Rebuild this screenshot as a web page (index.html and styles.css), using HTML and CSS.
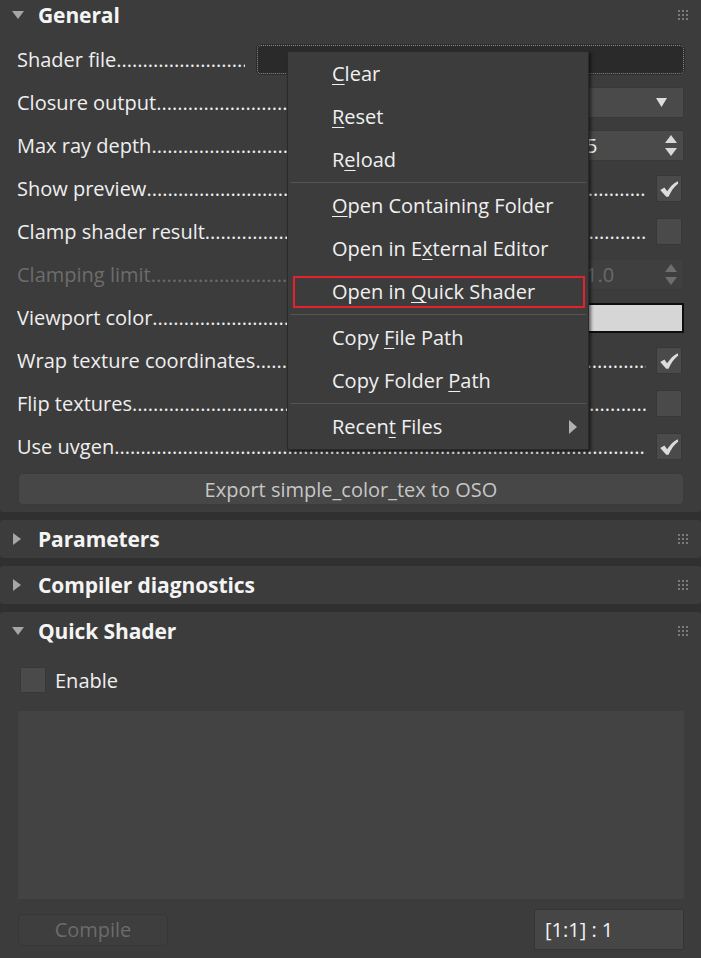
FILE: index.html
```html
<!DOCTYPE html>
<html>
<head>
<meta charset="utf-8">
<link rel="stylesheet" href="styles.css">
</head>
<body>
<div class="panel">
  <section class="sec first">
    <div class="head">
      <svg class="tri" width="12" height="12" viewBox="0 0 12 12"><path d="M0 2H12L6 10Z" fill="#a6a6a6"/></svg>
      <span class="title">General</span>
      <svg class="grip" width="10" height="10" viewBox="0 0 10 10"><g fill="#7a7a7a"><rect x="0" y="0" width="2" height="2"/><rect x="4" y="0" width="2" height="2"/><rect x="8" y="0" width="2" height="2"/><rect x="0" y="4" width="2" height="2"/><rect x="4" y="4" width="2" height="2"/><rect x="8" y="4" width="2" height="2"/><rect x="0" y="8" width="2" height="2"/><rect x="4" y="8" width="2" height="2"/><rect x="8" y="8" width="2" height="2"/></g></svg>
    </div>
    <div class="body">
      <div class="row"><span class="label">Shader file</span><div class="file"></div></div>
      <div class="row"><span class="label">Closure output</span><div class="ctl drop"><svg width="11" height="9" viewBox="0 0 11 9"><path d="M0 0H11L5.5 9Z" fill="#dedede"/></svg></div></div>
      <div class="row"><span class="label">Max ray depth</span><div class="ctl spin"><span class="val">5</span><svg width="12" height="22" viewBox="0 0 12 22"><path d="M6 0L12 8H0Z M0 13H12L6 21Z" fill="#d8d8d8"/></svg></div></div>
      <div class="row"><span class="label">Show preview</span><div class="cb"><svg width="26" height="26" viewBox="0 0 26 26"><path d="M3.5 14L8 11.5L11 15.5C14 10.5 18 6.5 22.5 4.5L23 7C18.5 10.5 15 15.5 12.5 21.5H10Z" fill="#dcdcdc"/></svg></div></div>
      <div class="row"><span class="label">Clamp shader result</span><div class="cb"></div></div>
      <div class="row dis"><span class="label">Clamping limit</span><div class="ctl spin off"><span class="val">1.0</span><svg width="12" height="22" viewBox="0 0 12 22"><path d="M6 0L12 8H0Z M0 13H12L6 21Z" fill="#6e6e6e"/></svg></div></div>
      <div class="row"><span class="label">Viewport color</span><div class="ctl swatch"></div></div>
      <div class="row"><span class="label">Wrap texture coordinates</span><div class="cb"><svg width="26" height="26" viewBox="0 0 26 26"><path d="M3.5 14L8 11.5L11 15.5C14 10.5 18 6.5 22.5 4.5L23 7C18.5 10.5 15 15.5 12.5 21.5H10Z" fill="#dcdcdc"/></svg></div></div>
      <div class="row"><span class="label">Flip textures</span><div class="cb"></div></div>
      <div class="row"><span class="label">Use uvgen</span><div class="cb"><svg width="26" height="26" viewBox="0 0 26 26"><path d="M3.5 14L8 11.5L11 15.5C14 10.5 18 6.5 22.5 4.5L23 7C18.5 10.5 15 15.5 12.5 21.5H10Z" fill="#dcdcdc"/></svg></div></div>
      <div class="btn export">Export simple_color_tex to OSO</div>
    </div>
  </section>

  <section class="sec">
    <div class="head">
      <svg class="tri" width="12" height="12" viewBox="0 0 12 12"><path d="M1 0L9 6L1 12Z" fill="#a6a6a6"/></svg>
      <span class="title">Parameters</span>
      <svg class="grip" width="10" height="10" viewBox="0 0 10 10"><g fill="#7a7a7a"><rect x="0" y="0" width="2" height="2"/><rect x="4" y="0" width="2" height="2"/><rect x="8" y="0" width="2" height="2"/><rect x="0" y="4" width="2" height="2"/><rect x="4" y="4" width="2" height="2"/><rect x="8" y="4" width="2" height="2"/><rect x="0" y="8" width="2" height="2"/><rect x="4" y="8" width="2" height="2"/><rect x="8" y="8" width="2" height="2"/></g></svg>
    </div>
  </section>

  <section class="sec">
    <div class="head">
      <svg class="tri" width="12" height="12" viewBox="0 0 12 12"><path d="M1 0L9 6L1 12Z" fill="#a6a6a6"/></svg>
      <span class="title">Compiler diagnostics</span>
      <svg class="grip" width="10" height="10" viewBox="0 0 10 10"><g fill="#7a7a7a"><rect x="0" y="0" width="2" height="2"/><rect x="4" y="0" width="2" height="2"/><rect x="8" y="0" width="2" height="2"/><rect x="0" y="4" width="2" height="2"/><rect x="4" y="4" width="2" height="2"/><rect x="8" y="4" width="2" height="2"/><rect x="0" y="8" width="2" height="2"/><rect x="4" y="8" width="2" height="2"/><rect x="8" y="8" width="2" height="2"/></g></svg>
    </div>
  </section>

  <section class="sec last">
    <div class="head">
      <svg class="tri" width="12" height="12" viewBox="0 0 12 12"><path d="M0 2H12L6 10Z" fill="#a6a6a6"/></svg>
      <span class="title">Quick Shader</span>
      <svg class="grip" width="10" height="10" viewBox="0 0 10 10"><g fill="#7a7a7a"><rect x="0" y="0" width="2" height="2"/><rect x="4" y="0" width="2" height="2"/><rect x="8" y="0" width="2" height="2"/><rect x="0" y="4" width="2" height="2"/><rect x="4" y="4" width="2" height="2"/><rect x="8" y="4" width="2" height="2"/><rect x="0" y="8" width="2" height="2"/><rect x="4" y="8" width="2" height="2"/><rect x="8" y="8" width="2" height="2"/></g></svg>
    </div>
    <div class="qbody">
      <div class="enable"><div class="cb"></div><span>Enable</span></div>
      <div class="editor"></div>
      <div class="bottom">
        <div class="btn compile">Compile</div>
        <div class="pos">[1:1] : 1</div>
      </div>
    </div>
  </section>
</div>

<div class="menu">
  <div class="item"><span><u>C</u>lear</span></div>
  <div class="item"><span><u>R</u>eset</span></div>
  <div class="item"><span>R<u>e</u>load</span></div>
  <div class="sep"></div>
  <div class="item"><span><u>O</u>pen Containing Folder</span></div>
  <div class="item"><span>Open in E<u>x</u>ternal Editor</span></div>
  <div class="item marked"><span>Open in <u>Q</u>uick Shader</span></div>
  <div class="sep"></div>
  <div class="item"><span>Copy <u>F</u>ile Path</span></div>
  <div class="item"><span>Copy Folder <u>P</u>ath</span></div>
  <div class="sep"></div>
  <div class="item sub"><span>Recen<u>t</u> Files</span><svg width="8" height="14" viewBox="0 0 8 14"><path d="M0 0L8 7L0 14Z" fill="#b0b0b0"/></svg></div>
</div>
</body>
</html>
```

FILE: styles.css
```css
* { box-sizing: border-box; margin: 0; padding: 0; }

body {
  width: 701px;
  height: 958px;
  overflow: hidden;
  position: relative;
  background: #303030;
  font-family: "Open Sans", "Noto Sans", sans-serif;
  font-size: 20px;
  color: #eeeeee;
}

.sec {
  background: #3c3c3c;
  border-radius: 3px;
  margin-bottom: 8px;
}
.sec.first { margin-top: -4px; }
.sec.last { height: 360px; margin-bottom: 0; }

.head {
  height: 38px;
  display: flex;
  align-items: center;
  padding: 0 13px 0 12px;
}
.head .tri { flex: none; margin-right: 14px; }
.head .title {
  flex: 1;
  font-weight: 700;
  font-size: 21px;
  color: #f4f4f4;
  letter-spacing: -0.1px;
}
.head .grip { flex: none; }

.body { padding: 4px 17px 7px 17px; }

.row {
  height: 43px;
  display: flex;
  align-items: center;
}
.label {
  flex: 1;
  min-width: 0;
  overflow: hidden;
  white-space: nowrap;
  color: #efefef;
}
.label::after {
  content: "....................................................................................................................................";
}
.row.dis .label { color: #6c6c6c; }

.file {
  flex: none;
  width: 427px;
  height: 29px;
  margin-left: 12px;
  background: #2a2a2a;
  border: 1px dotted #8c8c8c;
  border-radius: 4px;
  box-shadow: 0 0 0 1px #2c2c2c;
}

.ctl {
  flex: none;
  width: 107px;
  height: 31px;
  margin-left: 10px;
  display: flex;
  align-items: center;
  background: #4a4a4a;
  border: 1px solid #393939;
}
.drop { justify-content: flex-end; padding-right: 16px; }
.spin { padding: 0 6px 0 8px; color: #efefef; }
.spin .val { flex: 1; }
.spin.off { background: #3f3f3f; color: #6a6a6a; border-color: #3a3a3a; }
.swatch {
  height: 30px;
  background: #d6d6d6;
  border: 2px solid #0e0e0e;
}

.cb {
  flex: none;
  width: 26px;
  height: 27px;
  margin-left: 10px;
  margin-right: 2px;
  background: #4a4a4a;
  border: 1px solid #383838;
  display: flex;
  align-items: center;
  justify-content: center;
}
.cb svg { display: block; }

.btn {
  display: flex;
  align-items: center;
  justify-content: center;
  border-radius: 5px;
}
.export {
  margin: 5px 0 0 1px;
  height: 32px;
  background: #474747;
  border: 1px solid #3a3a3a;
  color: #c6c6c6;
}

.qbody { padding: 17px 17px 0 18px; }
.enable {
  display: flex;
  align-items: center;
  height: 26px;
  padding-left: 2px;
}
.enable .cb { margin: 0 9px 0 0; height: 26px; }
.enable span { color: #efefef; }

.editor {
  margin-top: 18px;
  height: 188px;
  background: #434343;
}

.bottom {
  margin-top: 10px;
  height: 41px;
  display: flex;
  align-items: center;
  justify-content: space-between;
}
.compile {
  width: 150px;
  height: 32px;
  background: #3e3e3e;
  border: 1px solid #363636;
  color: #6b6b6b;
}
.pos {
  width: 150px;
  height: 41px;
  display: flex;
  align-items: center;
  padding-left: 10px;
  background: #464646;
  border: 1px solid #353535;
  color: #f2f2f2;
}

/* context menu overlay */
.menu {
  position: absolute;
  left: 287px;
  top: 51px;
  width: 302px;
  height: 399px;
  background: #3c3c3c;
  border: 1px solid #2a2a2a;
  box-shadow: 2px 2px 3px rgba(0, 0, 0, 0.55);
}
.item {
  position: relative;
  height: 43px;
  display: flex;
  align-items: center;
  padding-left: 44px;
  color: #f0f0f0;
  white-space: nowrap;
}
.item u { text-decoration-thickness: 1px; text-underline-offset: 3px; }
.item.marked::after {
  content: "";
  position: absolute;
  left: 5px;
  right: 3px;
  top: 6px;
  bottom: 5px;
  border: 2px solid #e5222b;
}
.item.sub { justify-content: space-between; padding-right: 11px; }
.sep {
  height: 1px;
  margin: 1px 2px 1px 2px;
  background: #555555;
}
```
